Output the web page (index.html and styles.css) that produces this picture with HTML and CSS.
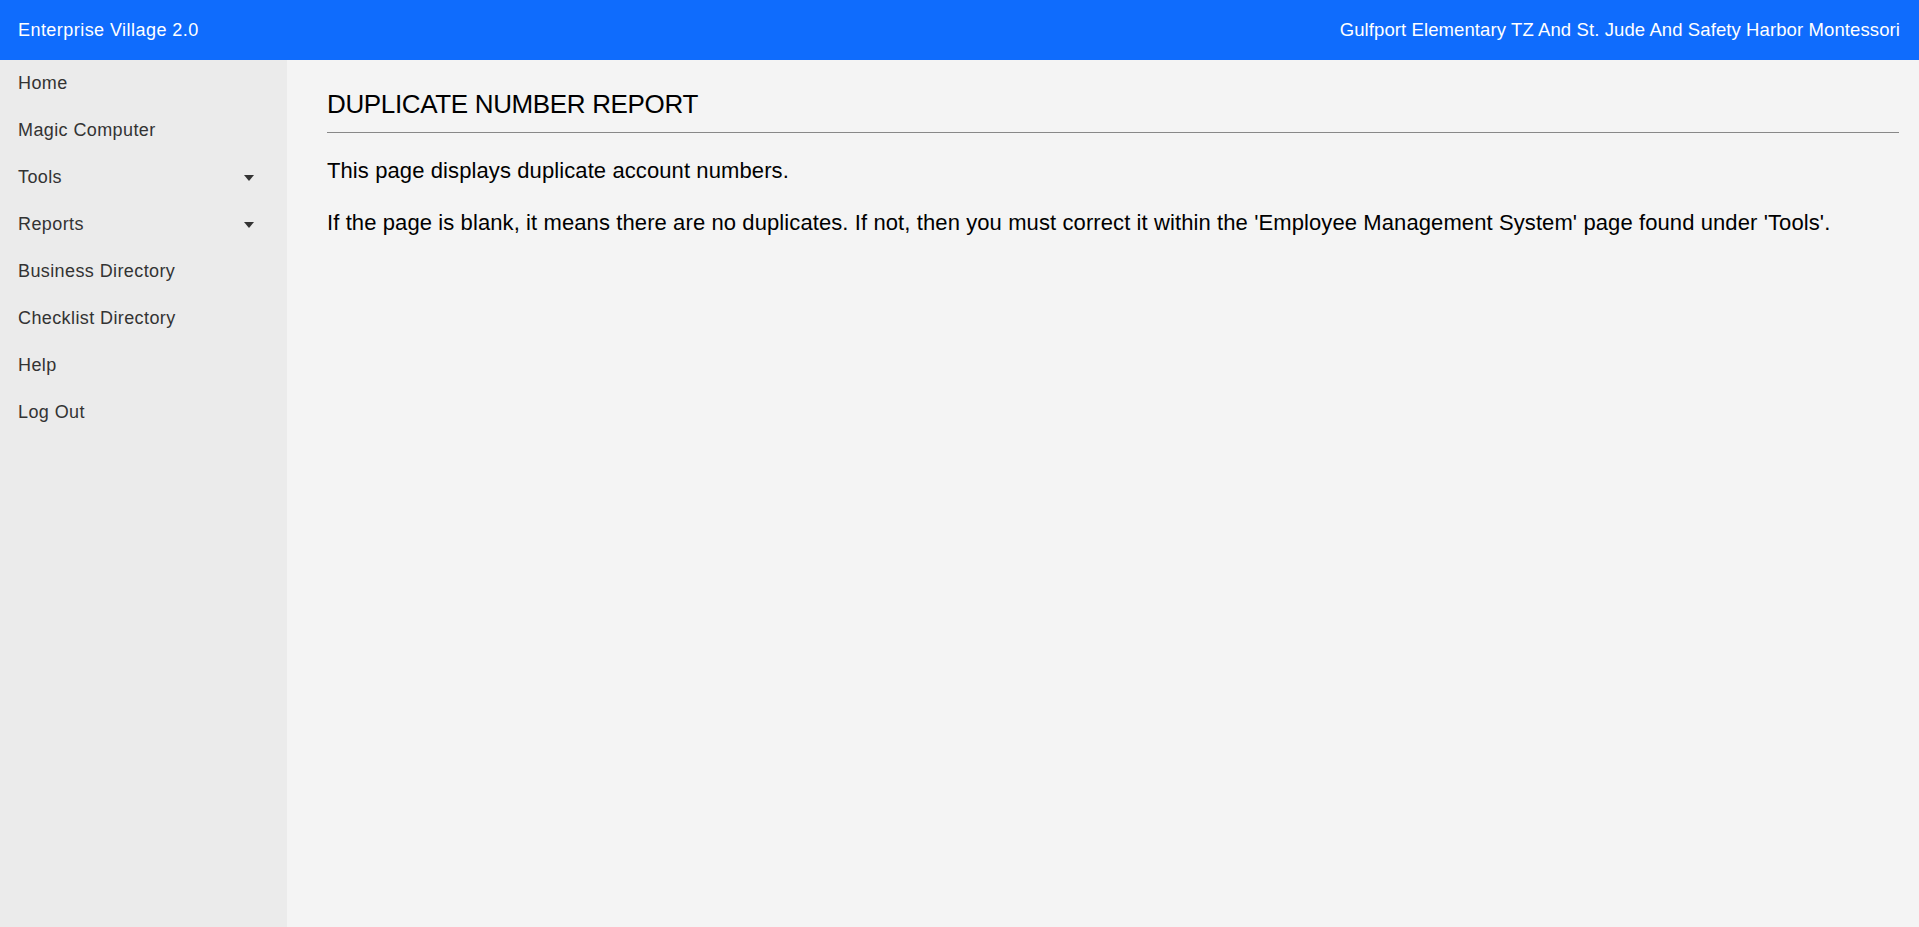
FILE: index.html
```html
<!DOCTYPE html>
<html lang="en">
<head>
<meta charset="utf-8">
<title>Enterprise Village 2.0</title>
<link rel="stylesheet" href="styles.css">
</head>
<body>
<header class="topbar">
  <div class="brand">Enterprise Village 2.0</div>
  <div class="school">Gulfport Elementary TZ And St. Jude And Safety Harbor Montessori</div>
</header>
<div class="layout">
  <nav class="sidebar">
    <a class="nav-item" href="#">Home</a>
    <a class="nav-item" href="#">Magic Computer</a>
    <a class="nav-item" href="#"><span>Tools</span><span class="caret"></span></a>
    <a class="nav-item" href="#"><span>Reports</span><span class="caret"></span></a>
    <a class="nav-item" href="#">Business Directory</a>
    <a class="nav-item" href="#">Checklist Directory</a>
    <a class="nav-item" href="#">Help</a>
    <a class="nav-item" href="#">Log Out</a>
  </nav>
  <main class="content">
    <h1 class="title">DUPLICATE NUMBER REPORT</h1>
    <p class="text first">This page displays duplicate account numbers.</p>
    <p class="text">If the page is blank, it means there are no duplicates. If not, then you must correct it within the 'Employee Management System' page found under 'Tools'.</p>
  </main>
</div>
</body>
</html>
```
FILE: styles.css
```css
html, body {
  margin: 0;
  padding: 0;
  height: 100%;
}
body {
  font-family: "Liberation Sans", Arial, sans-serif;
  background: #f4f4f4;
  display: flex;
  flex-direction: column;
}
.topbar {
  height: 60px;
  flex: 0 0 60px;
  background: #0f6cfd;
  color: #ffffff;
  display: flex;
  align-items: center;
  justify-content: space-between;
  padding: 0 19px 0 18px;
  box-sizing: border-box;
}
.brand {
  font-size: 18px;
  letter-spacing: 0.45px;
  padding-top: 1px;
}
.school {
  font-size: 18.5px;
  letter-spacing: 0.1px;
}
.layout {
  flex: 1;
  display: flex;
  min-height: 0;
}
.sidebar {
  width: 287px;
  flex: 0 0 287px;
  background: #ebebeb;
  display: flex;
  flex-direction: column;
}
.nav-item {
  height: 47px;
  display: flex;
  align-items: center;
  justify-content: space-between;
  padding: 0 33px 0 18px;
  color: #333333;
  text-decoration: none;
  font-size: 18px;
  letter-spacing: 0.4px;
}
.caret {
  width: 0;
  height: 0;
  border-left: 5.5px solid transparent;
  border-right: 5.5px solid transparent;
  border-top: 6px solid #333333;
  margin-top: 1px;
}
.content {
  flex: 1;
  padding: 29px 20px 0 40px;
  background: #f4f4f4;
}
.title {
  margin: 0;
  font-size: 26px;
  line-height: 30px;
  font-weight: normal;
  letter-spacing: -0.35px;
  color: #000000;
  padding-bottom: 13px;
  border-bottom: 1px solid #888888;
}
.text {
  margin: 26px 0 0 0;
  font-size: 22px;
  line-height: 26px;
  letter-spacing: 0.1px;
  color: #000000;
}
.text.first {
  margin-top: 25px;
}
```
